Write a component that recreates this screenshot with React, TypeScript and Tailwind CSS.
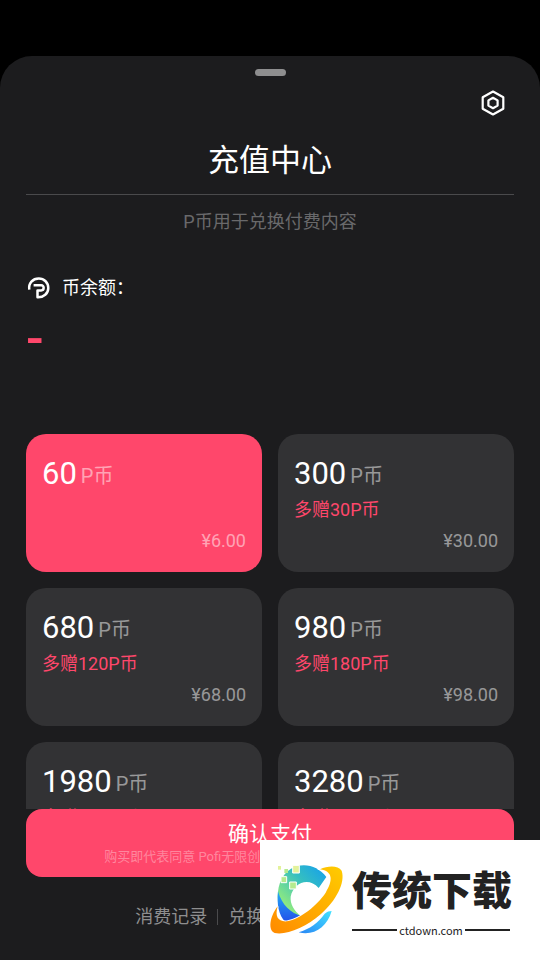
import { useState } from 'react';

interface CoinPack {
  coins: number;
  bonus: number;
  price: string;
}

const packs: CoinPack[] = [
  { coins: 60, bonus: 0, price: '6.00' },
  { coins: 300, bonus: 30, price: '30.00' },
  { coins: 680, bonus: 120, price: '68.00' },
  { coins: 980, bonus: 180, price: '98.00' },
  { coins: 1980, bonus: 400, price: '198.00' },
  { coins: 3280, bonus: 700, price: '328.00' },
];

const links = ['消费记录', '兑换记录', 'P币兑换码'];

function CoinIcon() {
  return (
    <svg className="size-6" viewBox="0 0 24 24" fill="none" stroke="white" strokeWidth="2.5">
      <path
        d="M3.300 13.600C2.300 7 6.800 2.500 12.800 2.500c5.400 0 9.500 4.200 9.500 9.400 0 5.600-4.600 9.700-10.800 9.400V14.400h3.600c3.400 0 3.400-5.200 0-5.200H7.600"
        strokeLinejoin="round"
      />
    </svg>
  );
}

function SettingsIcon() {
  return (
    <svg className="size-[26px]" viewBox="0 0 26 26" fill="none" stroke="white" strokeWidth="2.200" strokeLinejoin="round">
      <path d="M13 1.500 23.300 7.200v11.600L13 24.500 2.700 18.800V7.200Z" />
      <path d="M13 7.800 17.600 10.400v5.200L13 18.200l-4.600-2.600v-5.200Z" />
    </svg>
  );
}

function SiteLogo() {
  return (
    <svg className="h-[76px] w-[78px] shrink-0" viewBox="0 0 234 228">
      <defs>
        <linearGradient id="ring" x1="0" y1="1" x2="1" y2="0">
          <stop offset="0.15" stopColor="#97ee7a" />
          <stop offset="0.6" stopColor="#35bfc0" />
          <stop offset="1" stopColor="#139df0" />
        </linearGradient>
        <linearGradient id="shade" x1="0" y1="0" x2="0" y2="1">
          <stop offset="0" stopColor="#23aaf5" />
          <stop offset="1" stopColor="#2350ea" />
        </linearGradient>
        <linearGradient id="orbit" x1="0" y1="1" x2="1" y2="0">
          <stop offset="0" stopColor="#ff8a00" />
          <stop offset="1" stopColor="#ffcc00" />
        </linearGradient>
        <linearGradient id="drop" x1="0" y1="1" x2="1" y2="0">
          <stop offset="0" stopColor="#2a86f5" />
          <stop offset="1" stopColor="#42e2ff" />
        </linearGradient>
      </defs>
      <path
        d="M175 45C150 10 104 0 69 20C37 40 26 78 30 120C36 150 62 170 100 163C77 147 66 124 68 104C76 62 122 43 152 78Z"
        fill="url(#ring)"
      />
      <path d="M30 88C26 128 32 160 52 180L102 163C68 153 42 130 30 88Z" fill="url(#shade)" />
      <path d="M191 147C177 196 138 222 92 211C125 201 151 182 170 155C177 149 184 147 191 147Z" fill="url(#drop)" />
      <path
        d="M156 22C180 11 210 10 221 26C233 62 204 116 158 157C115 195 54 221 20 213C0 205 4 166 29 133C20 164 30 180 57 178C98 170 147 131 173 92C195 56 196 28 156 22Z"
        fill="url(#orbit)"
        stroke="white"
        strokeWidth="5"
        paintOrder="stroke"
      />
      <g stroke="white" strokeWidth="3">
        <path d="M74 10h20v23H74Z" fill="#e3f29a" />
        <path d="M39 44h17v18H39Z" fill="#b5eb8f" />
        <path d="M65 60h20v21H65Z" fill="#b5eb8f" />
      </g>
      <path d="M30 12h9v11h-9Z" fill="#e3f29a" />
      <path d="M49 21h11v12H49Z" fill="#b5eb8f" />
    </svg>
  );
}

export default function App() {
  const [selected, setSelected] = useState(0);

  return (
    <div className="relative h-screen overflow-hidden bg-black pt-14 font-[Roboto,'Noto_Sans_CJK_SC',sans-serif] text-white">
      <main className="flex h-full flex-col rounded-t-[32px] bg-[#1c1c1e] px-[26px] pt-[13px] pb-[31px]">
        <div className="h-[7px] w-[31px] shrink-0 self-center rounded-full bg-[#8e8e8f]" />

        <button aria-label="设置" className="mt-1.5 flex size-[42px] shrink-0 items-center justify-center self-end">
          <SettingsIcon />
        </button>

        <h1 className="mt-[13px] border-b border-[#4a4a4c] pb-[9px] text-center text-[31px] leading-[48px]">充值中心</h1>
        <p className="mt-[15px] text-center text-[18px] leading-6 text-[#69696b]">P币用于兑换付费内容</p>

        <div className="mt-[42px] flex items-center gap-3 text-[18px] leading-6">
          <CoinIcon />
          <span>币余额：</span>
        </div>
        <div className="mt-[15px] text-[52px] leading-[48px] font-medium text-[#ff476b]">-</div>

        {/* 充值档位 */}
        <div className="mt-[71px] grid min-h-0 flex-1 auto-rows-max grid-cols-2 gap-4 overflow-hidden">
          {packs.map((pack, index) => (
            <button
              key={pack.coins}
              aria-pressed={selected === index}
              onClick={() => setSelected(index)}
              className={`flex flex-col rounded-[20px] p-4 text-left ${
                selected === index ? 'bg-[#ff476b]' : 'bg-[#323234]'
              }`}
            >
              <span className="flex items-center gap-1">
                <span className="text-[31px] leading-[48px]">{pack.coins}</span>
                <span className="pt-1 text-[20px] leading-6 text-white/50">P币</span>
              </span>
              <span className="h-6 text-[18px] leading-6 text-[#ff476b]">
                {pack.bonus > 0 && `多赠${pack.bonus}P币`}
              </span>
              <span className="mt-1 self-end text-[18px] leading-[30px] text-white/50">¥{pack.price}</span>
            </button>
          ))}
        </div>

        <button className="flex shrink-0 flex-col items-center rounded-[16px] bg-[#ff476b] py-[11px]">
          <span className="text-[21px] leading-7">确认支付</span>
          <span className="text-[13px] leading-[18px] text-white/35">购买即代表同意 Pofi无限创使用条款 及 用户充值服务协议</span>
        </button>

        <nav className="mt-7 flex shrink-0 items-center justify-center text-[18px] leading-6 text-[#8e8e8f]">
          {links.map((link, index) => (
            <div key={link} className="flex items-center">
              {index > 0 && <span className="mx-2.5 h-4 w-px bg-[#4a4a4c]" />}
              <a href="#">{link}</a>
            </div>
          ))}
        </nav>
      </main>

      {/* 站点角标 */}
      <aside className="absolute right-0 bottom-0 flex h-[120px] w-[280px] items-center gap-1.5 bg-white pl-2 text-[#222222]">
        <SiteLogo />
        <div className="w-[158px]">
          <div className="text-[40px] leading-[60px] font-black whitespace-nowrap">传统下载</div>
          <div className="flex items-center gap-0.5 font-['Noto_Sans_CJK_SC',sans-serif] text-[11px] leading-4">
            <span className="h-0.5 flex-1 bg-[#222222]" />
            <span>ctdown.com</span>
            <span className="h-0.5 flex-1 bg-[#222222]" />
          </div>
        </div>
      </aside>
    </div>
  );
}
